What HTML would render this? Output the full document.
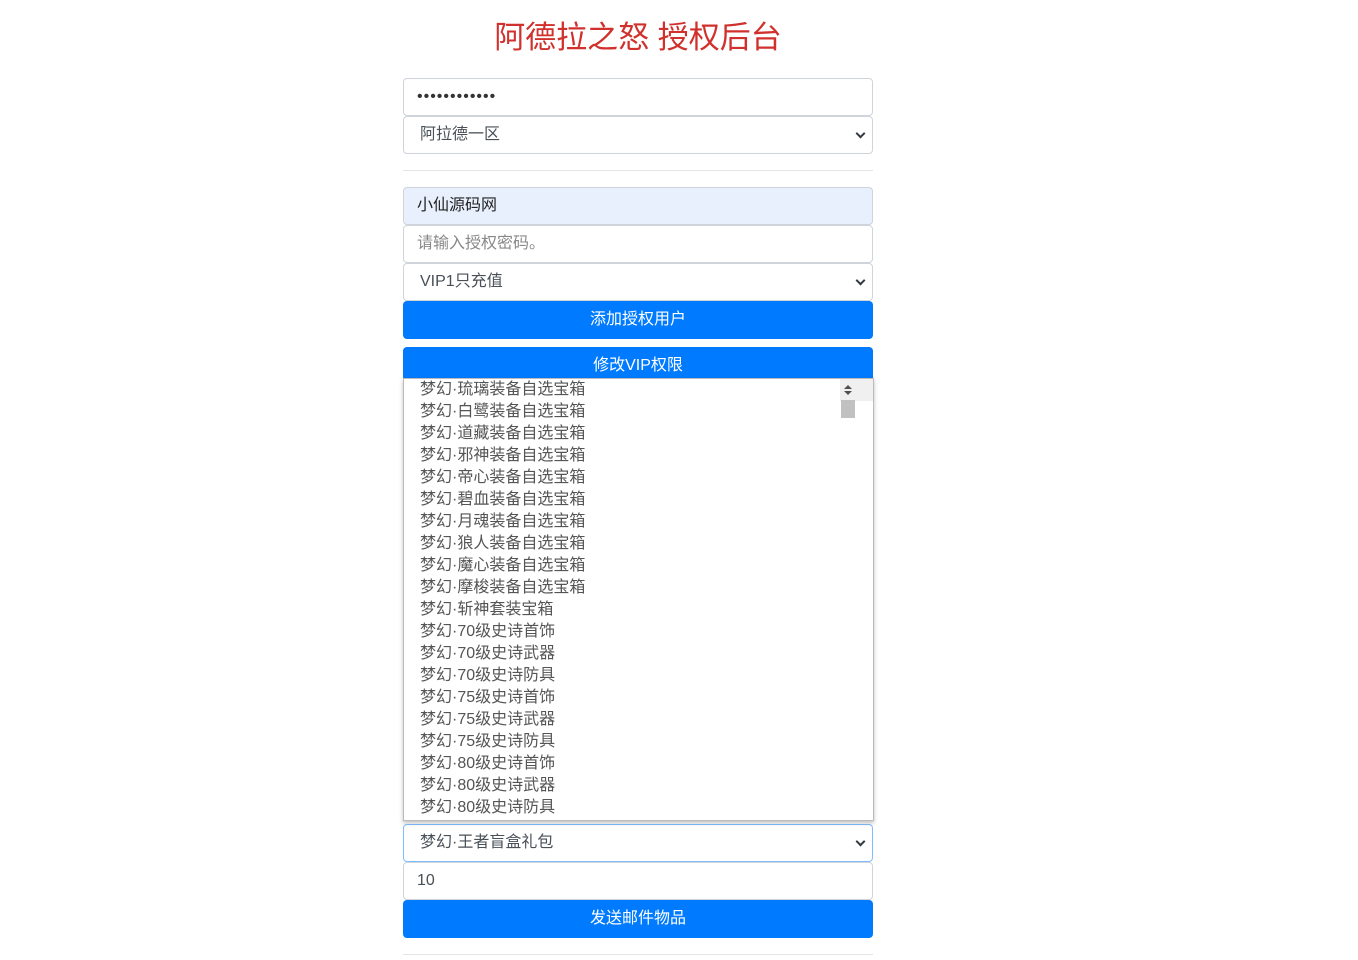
<!DOCTYPE html>
<html><head><meta charset="utf-8"><style>
body{margin:0;background:#fff;font-family:"Liberation Sans","Noto Sans CJK SC",sans-serif;font-size:16px;color:#495057}
.c{position:absolute;left:403px;width:470px}
h1{position:absolute;top:16px;left:0;width:1276px;text-align:center;margin:0;font-weight:400;font-size:31px;color:#d0312d;line-height:44px}
.f{position:absolute;left:403px;width:468px;height:36px;border:1px solid #ced4da;border-radius:4px;background:#fff;line-height:36px;box-sizing:content-box}
.f span{padding-left:13px}
.s span{padding-left:16px}
.s:after{content:"";position:absolute;right:8px;top:13px;width:5px;height:5px;border-right:2px solid #343a40;border-bottom:2px solid #343a40;transform:rotate(45deg)}
.b{position:absolute;left:403px;width:470px;height:38px;background:#007bff;color:#fff;text-align:center;line-height:38px;border-radius:4px}
hr{position:absolute;left:403px;width:470px;margin:0;border:0;border-top:1px solid #e5e5e5}
.dd{position:absolute;left:403px;top:378px;width:469px;height:441px;background:#fff;border:1px solid #bbb;box-shadow:0 2px 4px rgba(0,0,0,.25);overflow:hidden}
.dd div{height:22px;line-height:22px;padding-left:16px;color:#555}
.sb{position:absolute;right:0;top:0;width:17px;height:441px;background:#f0f0f0}
</style></head><body>
<h1>阿德拉之怒 授权后台</h1>
<div class="f" style="top:78px"><span style="letter-spacing:1px;color:#333">••••••••••••</span></div>
<div class="f s" style="top:116px"><span>阿拉德一区</span></div>
<hr style="top:170px">
<div class="f" style="top:187px;background:#e8f0fe"><span style="color:#222">小仙源码网</span></div>
<div class="f" style="top:225px"><span style="color:#888">请输入授权密码。</span></div>
<div class="f s" style="top:263px"><span>VIP1只充值</span></div>
<div class="b" style="top:301px">添加授权用户</div>
<div class="b" style="top:347px">修改VIP权限</div>
<div class="f s" style="top:824px;border-color:#80bdff"><span>梦幻·王者盲盒礼包</span></div>
<div class="f" style="top:862px"><span>10</span></div>
<div class="b" style="top:900px">发送邮件物品</div>
<hr style="top:954px">
<div class="dd">
<div>梦幻·琉璃装备自选宝箱</div><div>梦幻·白鹭装备自选宝箱</div><div>梦幻·道藏装备自选宝箱</div><div>梦幻·邪神装备自选宝箱</div><div>梦幻·帝心装备自选宝箱</div><div>梦幻·碧血装备自选宝箱</div><div>梦幻·月魂装备自选宝箱</div><div>梦幻·狼人装备自选宝箱</div><div>梦幻·魔心装备自选宝箱</div><div>梦幻·摩梭装备自选宝箱</div><div>梦幻·斩神套装宝箱</div><div>梦幻·70级史诗首饰</div><div>梦幻·70级史诗武器</div><div>梦幻·70级史诗防具</div><div>梦幻·75级史诗首饰</div><div>梦幻·75级史诗武器</div><div>梦幻·75级史诗防具</div><div>梦幻·80级史诗首饰</div><div>梦幻·80级史诗武器</div><div>梦幻·80级史诗防具</div>
<div class="sb"><div style="position:absolute;left:1px;top:21px;width:14px;height:18px;background:#c1c1c1;padding:0"></div>
<div style="position:absolute;left:4px;top:6px;width:0;height:0;padding:0;border:4px solid transparent;border-bottom:4px solid #505050;border-top:0"></div>
<div style="position:absolute;left:4px;bottom:6px;width:0;height:0;padding:0;border:4px solid transparent;border-top:4px solid #505050;border-bottom:0"></div></div>
</div>
</body></html>
